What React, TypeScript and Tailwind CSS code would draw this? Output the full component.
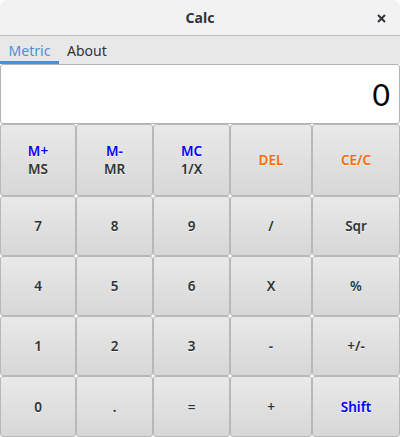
import React from "react";

type Btn = { top?: string; bottom?: string; label?: string; color?: "blue" | "orange" | "dark" };

const rows: Btn[][] = [
  [
    { top: "M+", bottom: "MS" },
    { top: "M-", bottom: "MR" },
    { top: "MC", bottom: "1/X" },
    { label: "DEL", color: "orange" },
    { label: "CE/C", color: "orange" },
  ],
  [{ label: "7" }, { label: "8" }, { label: "9" }, { label: "/" }, { label: "Sqr" }],
  [{ label: "4" }, { label: "5" }, { label: "6" }, { label: "X" }, { label: "%" }],
  [{ label: "1" }, { label: "2" }, { label: "3" }, { label: "-" }, { label: "+/-" }],
  [{ label: "0" }, { label: "." }, { label: "=" }, { label: "+" }, { label: "Shift", color: "blue" }],
];

function colorClass(c?: string) {
  if (c === "blue") return "text-[#0000ff]";
  if (c === "orange") return "text-[#ff6a00]";
  return "text-[#2e3436]";
}

export default function App() {
  return (
    <div className="w-[400px] h-[437px] overflow-hidden bg-white flex flex-col [font-family:'Noto_Sans',sans-serif]">
      {/* Title bar */}
      <div className="relative h-[36px] shrink-0 bg-[#f2f2f2] border-b border-[#bdbdbd] rounded-t-[7px] flex items-center justify-center">
        <span className="text-[14px] font-bold text-[#2e3436]">Calc</span>
        <svg className="absolute right-[14px] top-[14px]" width="9" height="9" viewBox="0 0 9 9">
          <path d="M1 1 L8 8 M8 1 L1 8" stroke="#2e3436" strokeWidth="2" strokeLinecap="butt" />
        </svg>
      </div>
      {/* Tabs */}
      <div className="h-[28px] shrink-0 bg-[#e8e8e8] flex items-stretch text-[14px]">
        <div className="w-[59px] flex items-center justify-center border-b-[3px] border-[#4a90d9] text-[#4a90d9] pt-[3px]">Metric</div>
        <div className="px-[8px] flex items-center border-b-[3px] border-transparent text-[#2e3436] pt-[3px]">About</div>
      </div>
      {/* Display */}
      <div className="h-[60px] shrink-0 border border-[#b3b3b3] rounded-[3px] bg-white flex items-center justify-end pr-[9px]">
        <span className="text-[30px] leading-none text-black [font-family:Lato,sans-serif]">0</span>
      </div>
      {/* Keypad */}
      <div className="grid grid-cols-[76px_77px_77px_82px_88px] grid-rows-[72px_60px_60px_60px_61px]">
        {rows.flat().map((b, i) => (
          <button
            key={i}
            className="border border-[#b8b8b8] rounded-[3px] bg-gradient-to-b from-[#e9e9e9] to-[#d7d7d7] flex flex-col items-center justify-center text-[13.5px] font-semibold leading-[18px] [text-shadow:0_1px_rgba(255,255,255,0.8)]"
          >
            {b.label !== undefined ? (
              <span className={colorClass(b.color)}>{b.label}</span>
            ) : (
              <>
                <span className="text-[#0000ff]">{b.top}</span>
                <span className="text-[#2e3436]">{b.bottom}</span>
              </>
            )}
          </button>
        ))}
      </div>
    </div>
  );
}
